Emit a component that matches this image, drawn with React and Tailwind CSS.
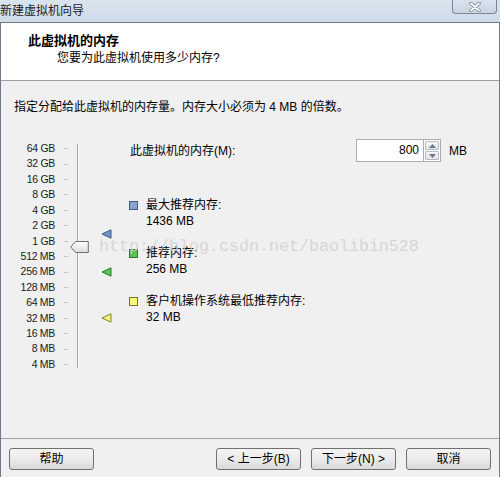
import React from "react";

const levels = [
  "64 GB", "32 GB", "16 GB", "8 GB", "4 GB", "2 GB", "1 GB",
  "512 MB", "256 MB", "128 MB", "64 MB", "32 MB", "16 MB", "8 MB", "4 MB",
];
const STEP = 15.43;
// center of a value (in MB) measured from the top of the scale
const posOf = (mb) => Math.log2(65536 / mb) * STEP + STEP / 2;

const markers = [
  { mb: 1436, fill: "#7096c6", stroke: "#3b5b86" },
  { mb: 256, fill: "#58c850", stroke: "#2c7a2c" },
  { mb: 32, fill: "#f7f27c", stroke: "#85822f" },
];

const legend = [
  { label: "最大推荐内存:", value: "1436 MB", box: "bg-[#8aa4cf] border-[#3d5a88]" },
  { label: "推荐内存:", value: "256 MB", box: "bg-[#5cc24f] border-[#2d772d]" },
  { label: "客户机操作系统最低推荐内存:", value: "32 MB", box: "bg-[#fdf97c] border-[#77742c]" },
];

function Marker({ fill, stroke }) {
  return (
    <svg width="11" height="10" viewBox="0 0 11 10">
      <polygon points="1,5 10,0.8 10,9.2" fill={fill} stroke={stroke} strokeWidth="1" />
    </svg>
  );
}

function Thumb() {
  return (
    <svg width="19" height="12" viewBox="0 0 19 12">
      <defs>
        <linearGradient id="tg" x1="0" y1="0" x2="0" y2="1">
          <stop offset="0" stopColor="#ffffff" />
          <stop offset="1" stopColor="#dcdcdc" />
        </linearGradient>
      </defs>
      <path d="M0.8 6 L5.5 0.5 H18.3 V11.5 H5.5 Z" fill="url(#tg)" stroke="#6f6f6f" strokeWidth="1" />
    </svg>
  );
}

function Spinner() {
  return (
    <div className="flex flex-col w-[17px] h-[23px] border border-[#a9acb3] border-l-0 bg-white p-[1px] gap-[1px]">
      <div className="flex-1 flex items-center justify-center border border-[#b7bcc4] rounded-[1px] bg-gradient-to-b from-[#f6f6f6] to-[#dfe3e8]">
        <svg width="7" height="4" viewBox="0 0 7 4">
          <polygon points="3.5,0 7,4 0,4" fill="#6f7680" />
        </svg>
      </div>
      <div className="flex-1 flex items-center justify-center border border-[#b7bcc4] rounded-[1px] bg-gradient-to-b from-[#f6f6f6] to-[#dfe3e8]">
        <svg width="7" height="4" viewBox="0 0 7 4">
          <polygon points="0,0 7,0 3.5,4" fill="#6f7680" />
        </svg>
      </div>
    </div>
  );
}

function Button({ children }) {
  return (
    <button className="w-[85px] h-[22px] border border-[#707070] rounded-[3px] bg-gradient-to-b from-[#f4f4f4] via-[#ebebeb] to-[#d9d9d9] text-[12px] leading-[20px] text-black">
      {children}
    </button>
  );
}

export default function App() {
  return (
    <div className="relative w-[500px] h-[477px] flex flex-col overflow-hidden bg-[#f0f0f0] text-black font-['Liberation_Sans','Noto_Sans_CJK_SC',sans-serif]">
      {/* Title bar */}
      <div className="h-[22px] flex items-start justify-between bg-gradient-to-b from-[#dae4ee] to-[#cfdbe7]">
        <div className="pt-[3px] text-[12px] leading-[16px] text-[#1a1a1a]">新建虚拟机向导</div>
        <div className="mr-[3px] w-[45px] h-[14px] flex items-center justify-center border border-t-0 border-[#7c8794] rounded-b-[4px] bg-gradient-to-b from-[#d9e3ed] to-[#c9d5e2]">
          <svg width="14" height="10" viewBox="0 0 14 10">
            <path d="M3 1.5 L11 8.5 M11 1.5 L3 8.5" stroke="#7b8592" strokeWidth="3.6" strokeLinecap="round" />
            <path d="M3 1.5 L11 8.5 M11 1.5 L3 8.5" stroke="#ffffff" strokeWidth="1.8" strokeLinecap="round" />
          </svg>
        </div>
      </div>

      <div className="flex-1 flex flex-col border-x border-t border-[#6f7b88]">
        {/* Header */}
        <div className="h-[58px] bg-white border-b border-[#a0a0a0] pl-[27px] pt-[10px]">
          <div className="text-[13px] leading-[16px] font-bold">此虚拟机的内存</div>
          <div className="mt-[1px] pl-[29px] text-[12px] leading-[16px]">您要为此虚拟机使用多少内存?</div>
        </div>

        {/* Content */}
        <div className="flex-1">
          <div className="pt-[18px] pl-[13px] text-[12px] leading-[16px]">
            指定分配给此虚拟机的内存量。内存大小必须为 4 MB 的倍数。
          </div>

          <div className="mt-[24px] flex">
            {/* Slider */}
            <div className="relative mt-[2px] w-[129px] flex">
              <div className="w-[54px] flex flex-col text-right text-[10.5px] tracking-[-0.3px] text-[#1a1a1a]">
                {levels.map((l) => (
                  <div key={l} className="h-[15.43px] leading-[15.43px]">{l}</div>
                ))}
              </div>
              <div className="ml-[9px] flex flex-col">
                {levels.map((l) => (
                  <div key={l} className="h-[15.43px] flex items-center">
                    <div className="w-[4px] h-px bg-[#c4c4c4]" />
                  </div>
                ))}
              </div>
              <div className="absolute left-[76px] top-[3px] h-[224px] w-px bg-[#a3a3a3] shadow-[1px_0_0_#ffffff]" />
              <div className="absolute left-[69px]" style={{ top: posOf(800) - 6 }}>
                <Thumb />
              </div>
              {markers.map((m) => (
                <div key={m.mb} className="absolute left-[100px] flex" style={{ top: posOf(m.mb) - 5 }}>
                  <Marker fill={m.fill} stroke={m.stroke} />
                </div>
              ))}
            </div>

            {/* Right column */}
            <div className="flex flex-col">
              <div className="flex items-center h-[23px]">
                <div className="w-[226px] text-[12px] leading-[16px]">此虚拟机的内存(M):</div>
                <div className="w-[68px] h-[23px] border border-[#a9acb3] bg-white text-right pr-[4px] text-[12px] leading-[21px]">800</div>
                <Spinner />
                <div className="ml-[8px] text-[12px] leading-[16px]">MB</div>
              </div>

              <div className="mt-[35px] flex flex-col gap-[16px]">
                {legend.map((it) => (
                  <div key={it.label} className="flex -ml-[1px]">
                    <div className="w-[17px] h-[16px] flex items-center">
                      <div className={`w-[9px] h-[9px] border ${it.box}`} />
                    </div>
                    <div className="text-[12px] leading-[16px]">
                      <div>{it.label}</div>
                      <div>{it.value}</div>
                    </div>
                  </div>
                ))}
              </div>
            </div>
          </div>
        </div>

        {/* Footer */}
        <div className="h-[39px] border-t border-[#a0a0a0] pt-[9px] pl-[8px] pr-[8px] flex">
          <Button>帮助</Button>
          <div className="ml-auto flex gap-[10px]">
            <Button>&lt; 上一步(B)</Button>
            <Button>下一步(N) &gt;</Button>
            <Button>取消</Button>
          </div>
        </div>
      </div>

      {/* Watermark */}
      <div className="absolute left-[99px] top-[237px] text-[16.67px] leading-[20px] text-[#cfcfcf]/80 font-['Liberation_Mono',monospace] pointer-events-none">
        http://blog.csdn.net/baolibin528
      </div>
    </div>
  );
}
